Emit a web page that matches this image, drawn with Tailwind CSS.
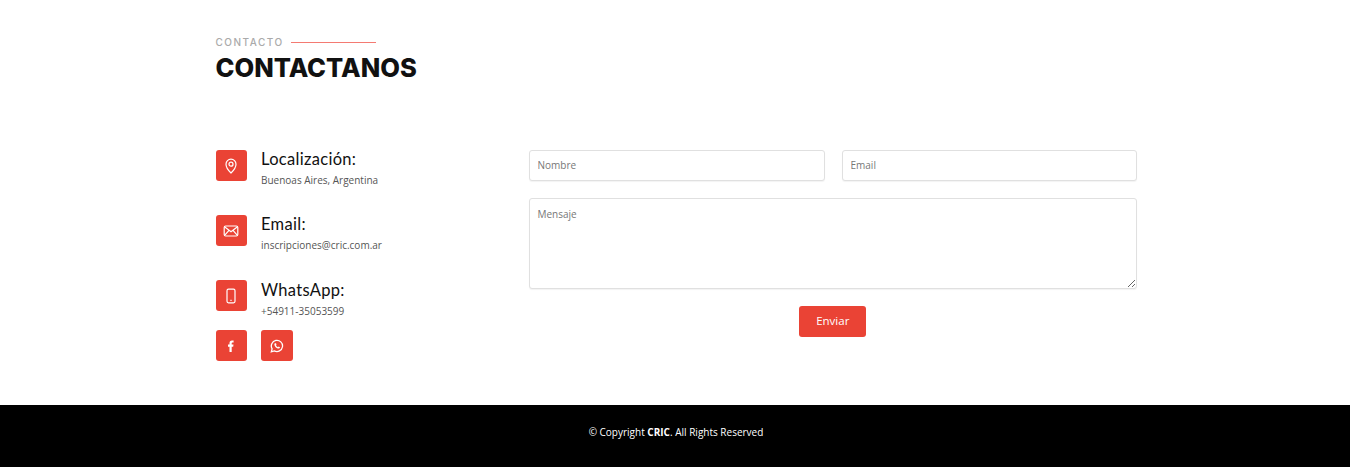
<!DOCTYPE html>
<html lang="es">
<head>
<meta charset="utf-8">
<title>Contacto</title>
<script src="https://cdn.jsdelivr.net/npm/@tailwindcss/browser@4"></script>
</head>
<body class="bg-white font-['Open_Sans',sans-serif] text-[#444]">
<div class="h-[405px] pl-[215.5px] pt-[35px]">
  <div class="flex h-[14px] items-center gap-[7px]">
    <span class="font-['Inter',sans-serif] text-[10px] leading-[14px] font-medium tracking-[1.5px] text-[#aaaaaa]">CONTACTO</span>
    <span class="h-px w-[85px] bg-[#ef4136]/70"></span>
  </div>
  <h2 class="mt-[3px] font-['Inter',sans-serif] text-[25.5px] leading-[32px] font-extrabold text-[#111111]">CONTACTANOS</h2>

  <div class="mt-[66px] flex">
    <div class="w-[313px]">
      <div class="flex h-[65px] gap-[14px]">
        <div class="flex h-[31px] w-[31.5px] items-center justify-center rounded-[3px] bg-[#ea4335]">
          <svg width="16" height="16" viewBox="0 0 16 16" fill="none" stroke="#fff" stroke-width="1.2"><path d="M8 15C8 15 13 10.2 13 6.2A5 5 0 0 0 3 6.2C3 10.2 8 15 8 15Z"/><circle cx="8" cy="6.2" r="2"/></svg>
        </div>
        <div class="-mt-px">
          <h4 class="font-['Lato',sans-serif] text-[16.5px] leading-[20px] tracking-[0.3px] text-[#111111]">Localización:</h4>
          <p class="mt-[3px] text-[10px] leading-[16px] text-[#555555]">Buenoas Aires, Argentina</p>
        </div>
      </div>
      <div class="flex h-[65px] gap-[14px]">
        <div class="flex h-[31px] w-[31.5px] items-center justify-center rounded-[3px] bg-[#ea4335]">
          <svg width="16" height="16" viewBox="0 0 16 16" fill="none" stroke="#fff" stroke-width="1.2"><rect x="1.2" y="3" width="13.6" height="10" rx="1.5"/><path d="M1.8 4L8 8.8L14.2 4M1.8 12.2L6 7.4M14.2 12.2L10 7.4"/></svg>
        </div>
        <div class="-mt-px">
          <h4 class="font-['Lato',sans-serif] text-[16.5px] leading-[20px] tracking-[0.3px] text-[#111111]">Email:</h4>
          <p class="mt-[3px] text-[10px] leading-[16px] text-[#555555]">inscripciones@cric.com.ar</p>
        </div>
      </div>
      <div class="flex h-[50px] gap-[14px]">
        <div class="flex h-[31px] w-[31.5px] items-center justify-center rounded-[3px] bg-[#ea4335]">
          <svg width="16" height="16" viewBox="0 0 16 16" fill="none" stroke="#fff" stroke-width="1.2"><rect x="4" y="1.2" width="8" height="13.6" rx="1.5"/><path d="M7.4 12.4H8.6"/></svg>
        </div>
        <div>
          <h4 class="font-['Lato',sans-serif] text-[16.5px] leading-[20px] tracking-[0.3px] text-[#111111]">WhatsApp:</h4>
          <p class="mt-[3px] text-[10px] leading-[16px] text-[#555555]">+54911-35053599</p>
        </div>
      </div>
      <div class="flex gap-[14px]">
        <a class="flex h-[31px] w-[31.5px] items-center justify-center rounded-[3px] bg-[#ea4335]">
          <svg width="14" height="14" viewBox="0 0 14 14" fill="#fff"><path d="M5.5 13V7.7H4V5.6H5.5V4.2C5.5 2.6 6.4 1.6 8 1.6H9.6V3.6H8.6C7.9 3.6 7.7 3.9 7.7 4.5V5.6H9.5L9.2 7.7H7.7V13Z"/></svg>
        </a>
        <a class="flex h-[31px] w-[31.5px] items-center justify-center rounded-[3px] bg-[#ea4335]">
          <svg width="14" height="14" viewBox="0 0 14 14" fill="none"><path d="M1.3 12.8L2.1 9.8A5.6 5.6 0 1 1 4.3 11.9Z" stroke="#fff" stroke-width="1.3"/><path d="M5 4.2C4.4 4.6 4.2 5.4 4.6 6.4C5.2 7.8 6.4 9 7.8 9.5C8.8 9.8 9.6 9.5 9.9 8.8L9.9 8.2L8.6 7.6L8 8.2C7.1 7.9 6.4 7.2 6 6.3L6.5 5.6L6 4.2Z" fill="#fff"/></svg>
        </a>
      </div>
    </div>
    <form class="w-[608.5px]">
      <div class="flex gap-[17px]">
        <input type="text" placeholder="Nombre" class="h-[31px] w-[296px] rounded-[3px] border border-[#e0e0e0] bg-white px-2 pb-[2px] text-[10px] shadow-[0_1px_1px_rgba(0,0,0,0.05)] outline-none placeholder:text-[#777777]">
        <input type="email" placeholder="Email" class="h-[31px] w-[295.5px] rounded-[3px] border border-[#e0e0e0] bg-white px-2 pb-[2px] text-[10px] shadow-[0_1px_1px_rgba(0,0,0,0.05)] outline-none placeholder:text-[#777777]">
      </div>
      <textarea placeholder="Mensaje" class="mt-[17px] block h-[91px] w-[608.5px] rounded-[3px] border border-[#e0e0e0] bg-white px-2 py-[7px] text-[10px] leading-[16px] shadow-[0_1px_1px_rgba(0,0,0,0.05)] outline-none placeholder:text-[#777777]"></textarea>
      <div class="mt-[17px] flex justify-center">
        <button type="button" class="h-[31px] w-[67px] rounded-[3px] bg-[#ea4335] pb-[2px] text-[11.5px] text-white">Enviar</button>
      </div>
    </form>
  </div>
</div>
<footer class="flex h-[62px] items-center justify-center bg-black pb-[7px] pl-[2px] text-[10px] text-white">
  <p>© Copyright <strong class="font-bold">CRIC</strong>. All Rights Reserved</p>
</footer>
</body>
</html>
